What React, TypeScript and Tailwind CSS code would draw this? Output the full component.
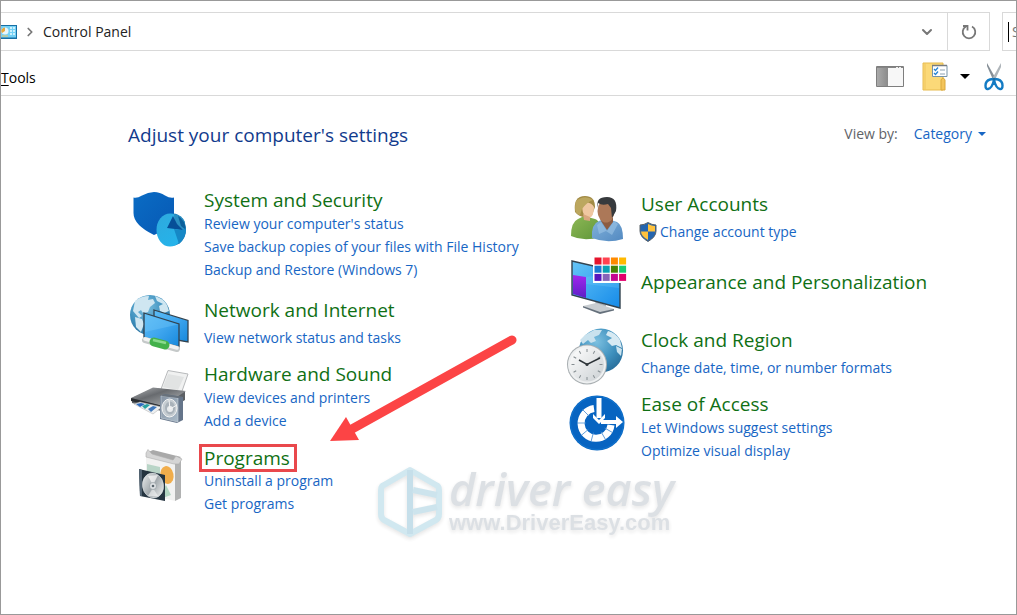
import { ReactNode } from "react";
import { ChevronDown, ChevronRight } from "lucide-react";

interface Category {
  title: string;
  links: string[];
  icon: ReactNode;
  highlighted?: boolean;
  shielded?: boolean;
}

function IconFrame({ children }: { children: ReactNode }) {
  return (
    <svg viewBox="0 -1 64 56" className="h-14 w-16 shrink-0 overflow-visible" aria-hidden="true">
      {children}
    </svg>
  );
}

function Globe({ id, cx, cy, r }: { id: string; cx: number; cy: number; r: number }) {
  return (
    <g>
      <defs>
        <radialGradient id={id} cx="0.4" cy="0.3" r="0.75">
          <stop offset="0" stopColor="#7cc0e0" />
          <stop offset="0.6" stopColor="#3d8fbd" />
          <stop offset="1" stopColor="#276c99" />
        </radialGradient>
      </defs>
      <circle cx={cx} cy={cy} r={r} fill={`url(#${id})`} />
    </g>
  );
}

function SecurityIcon() {
  return (
    <IconFrame>
      <defs>
        <linearGradient id="shield" x1="0" y1="0" x2="1" y2="1">
          <stop offset="0" stopColor="#0a6cc4" />
          <stop offset="1" stopColor="#0758b4" />
        </linearGradient>
        <linearGradient id="pie" x1="0" y1="0" x2="0.6" y2="1">
          <stop offset="0" stopColor="#2fa9dd" />
          <stop offset="1" stopColor="#25b3ea" />
        </linearGradient>
      </defs>
      <path d="M5.500 9.500 Q9 10.500 14 7.500 Q20 4 26 4 Q32 4 37 7.500 Q42 10.500 46 9.500 V25 Q46 39 26 47 Q5.500 37 5.500 25Z" fill="url(#shield)" />
      <ellipse cx="45" cy="41.500" rx="13" ry="16" fill="#1276b4" />
      <ellipse cx="42" cy="42" rx="13.500" ry="16.500" fill="url(#pie)" />
      <path d="M46 26 Q54 27 57 34 L56 44 L47 40Z" fill="#2a8fc2" />
      <path d="M50 28 Q57 32 58 42 L53 38Z" fill="#0b5f9b" />
      <path d="M45 28 L49 36 L55 42 L39 40Z" fill="#064f98" />
      <path d="M54 42 L46 41 L51 56 Q58 50 58 40Z" fill="#1688c6" />
    </IconFrame>
  );
}

function NetworkIcon() {
  return (
    <IconFrame>
      <defs>
        <linearGradient id="netscreen" x1="0" y1="0" x2="1" y2="1">
          <stop offset="0" stopColor="#5cbcf5" />
          <stop offset="0.500" stopColor="#3fa6ee" />
          <stop offset="1" stopColor="#1688dc" />
        </linearGradient>
      </defs>
      <Globe id="netglobe" cx={22} cy={21} r={20} />
      <path d="M7 7 Q13 2 21 2 L20 6 L25 5 L27 9 L22 13 L20 18 L15 19 L13 16 L10 18 L14 22 L11 24 L5 17Z" fill="#cfe6f1" />
      <path d="M27 2 Q36 5 39 11 L41 17 L36 19 L32 17 L31 12 L35 10 L29 7Z" fill="#cfe6f1" />
      <path d="M7 23 L14 25 L16 30 L13 38 L8 33Z" fill="#cfe6f1" />
      <path d="M26 16 L60 26.500 V48 L26 42Z" fill="url(#netscreen)" stroke="#33434f" strokeWidth="1.300" />
      <path d="M16 19 L51 30 V53 L16 44Z" fill="url(#netscreen)" stroke="#33434f" strokeWidth="1.300" />
      <path d="M17 20.500 L50 30.500 L17 38Z" fill="#79caf8" opacity=".35" />
      <path d="M17 46 L49 55" stroke="#c5c9c9" strokeWidth="6" strokeLinecap="round" />
      <path d="M17 45 L49 54" stroke="#f1f2f1" strokeWidth="3.500" strokeLinecap="round" />
      <path d="M26 48 L37 51" stroke="#43b14b" strokeWidth="9" strokeLinecap="round" />
      <path d="M25 46 L38 49" stroke="#89d98d" strokeWidth="2.500" />
    </IconFrame>
  );
}

function PrinterIcon() {
  return (
    <IconFrame>
      <defs>
        <linearGradient id="printer" x1="0" y1="0" x2="1" y2="1">
          <stop offset="0" stopColor="#b4b6b8" />
          <stop offset="0.400" stopColor="#686b6f" />
          <stop offset="1" stopColor="#bdc0c2" />
        </linearGradient>
        <linearGradient id="speaker" x1="0" y1="0" x2="1" y2="1">
          <stop offset="0" stopColor="#8693a3" />
          <stop offset="1" stopColor="#a9bac8" />
        </linearGradient>
      </defs>
      <path d="M33 27 L40 8.500 L60 12 L53 32Z" fill="#f0f1f1" stroke="#b8babc" />
      <path d="M40 12 L56 15 L50 28 L35 25Z" fill="#e1e3e3" />
      <path d="M4 36 L26 26 L57 30 L57 38 L37 50 L4 41Z" fill="#5c6064" />
      <path d="M3 36 L25 25.500 L58 29 L35 44Z" fill="url(#printer)" />
      <path d="M3 36 L35 44 V47 L3 39Z" fill="#292c30" />
      <path d="M6 42 L12 40 L34 45 L25 52Z" fill="#eef0f1" stroke="#aaa" strokeWidth=".5" />
      <path d="M8 42 L13 41 L17 42 L12 45Z" fill="#2b69bd" />
      <path d="M14 44 L19 42 L22 43 L17 47Z" fill="#28a2a1" />
      <path d="M20 47 L25 44 L29 45 L23 50Z" fill="#3f78bc" />
      <path d="M32 34 L37 32 L55 35 L55 58 L49 61 L32 57Z" fill="#65758a" />
      <path d="M33 34 L50 36 V60 L33 56Z" fill="url(#speaker)" stroke="#cbd3da" strokeWidth=".6" />
      <path d="M33 34 L37 32 L55 35 L50 36Z" fill="#68717b" />
      <ellipse cx="41.500" cy="46" rx="7.500" ry="9" fill="#c6cdd2" stroke="#f4f4f4" />
      <ellipse cx="42" cy="46" rx="5" ry="6.500" fill="#a9b2ba" />
      <circle cx="42" cy="47" r="3" fill="#e9ecee" />
      <path d="M41 38 L42 47 L49 43" fill="none" stroke="#f5f5f5" />
    </IconFrame>
  );
}

function ProgramsIcon() {
  return (
    <IconFrame>
      <defs>
        <linearGradient id="disc" x1="0" y1="0" x2="1" y2="1">
          <stop offset="0" stopColor="#eef0f1" />
          <stop offset="0.500" stopColor="#a2a9ad" />
          <stop offset="1" stopColor="#f7f7f7" />
        </linearGradient>
      </defs>
      <path d="M18 9 L47 17 V56 L18 49Z" fill="#f2f2f1" />
      <path d="M47 17 L53 13 V53 L47 56Z" fill="#b1b2b2" />
      <path d="M18 8 L25 5 L53 12 L47 17Z" fill="#a9a9a9" />
      <path d="M18 8 L20 4.500 L24 9 L45 15 L48 11 L54 14 L51 19 L46 19 L18 12Z" fill="#d5d5d5" stroke="#adadad" strokeWidth=".6" />
      <path d="M19 19 L32 22 V43 L19 39Z" fill="#b9d5c7" />
      <path d="M38 40 L43 50 L32 54 H28Z" fill="#b3d5c2" />
      <ellipse cx="39" cy="30" rx="6.500" ry="9" transform="rotate(-12 39 30)" fill="#f1ad4b" />
      <path d="M11 24 L37 30 V56 L12 51Z" fill="#253440" />
      <path d="M11 24 L14 25 V51 L12 51Z" fill="#536473" />
      <ellipse cx="25" cy="40.500" rx="10.500" ry="12.500" transform="rotate(-10 25 40.500)" fill="url(#disc)" stroke="#dce2e5" strokeWidth=".6" />
      <path d="M20 31 L25 40 L30 30Z" fill="#ffffff" opacity=".65" />
      <path d="M25 43 L20 51 L30 51Z" fill="#ffffff" opacity=".5" />
      <circle cx="25" cy="41" r="3.500" fill="#dfe2e4" stroke="#8a9399" strokeWidth=".6" />
      <circle cx="25" cy="41" r="1.300" fill="#5a666e" />
    </IconFrame>
  );
}

function UsersIcon() {
  return (
    <IconFrame>
      <defs>
        <linearGradient id="green" x1="0" y1="0" x2="1" y2="1">
          <stop offset="0" stopColor="#8eb855" />
          <stop offset="1" stopColor="#5f963a" />
        </linearGradient>
        <linearGradient id="blue" x1="0" y1="0" x2="1" y2="1">
          <stop offset="0" stopColor="#84b4dc" />
          <stop offset="1" stopColor="#5289c1" />
        </linearGradient>
      </defs>
      <g transform="translate(0 1)">
        <path d="M6 47 Q6 33 13 30 L19 27 L30 30 Q37 32 35 48 Q19 53 6 47Z" fill="url(#green)" />
        <path d="M10 23 Q8 7 20 7 Q30 7 30 18 L27 26 L20 28 Q14 28 10 23Z" fill="#a28b45" />
        <path d="M17 18 Q20 16 21 13 Q27 14 29 18 Q29 28 24 29 Q18 29 17 18Z" fill="#efc7a1" />
        <path d="M18 25 L25 28 L25 32 L19 31Z" fill="#d9a77f" />
        <path d="M11 12 Q20 5 28 11 Q22 13 17 20 L15 26 Q8 25 11 12Z" fill="#bca75f" />
        <path d="M27 49 Q26 35 34 32 L40 29 L52 33 Q58 36 58 50 Q42 55 27 49Z" fill="url(#blue)" />
        <path d="M36 29 H48 V33 L42 41 L36 32Z" fill="#8c5c43" />
        <ellipse cx="41" cy="22" rx="8.500" ry="11.500" fill="#ac7858" />
        <path d="M33 19 Q30 8 42 8 Q53 8 51 22 L47 29 L46 19 L43 15 Q37 17 33 14Z" fill="#373a3d" />
        <path d="M36 33 L42 42 L49 32 L53 35 L47 46 L41 42 L34 45 L32 36Z" fill="#9cc4e6" opacity=".6" />
      </g>
    </IconFrame>
  );
}

const swatches = [
  ["#e5142d", "#ff4250", "#ff8a00", "#ffb900"],
  ["#1978d0", "#0aa0b3", "#498205", "#19cc73"],
  ["#5715bd", "#8764b8", "#c50790", "#e3006c"],
];

function AppearanceIcon() {
  return (
    <IconFrame>
      <defs>
        <linearGradient id="display" x1="0" y1="0" x2="1" y2="1">
          <stop offset="0" stopColor="#65c5f7" />
          <stop offset="1" stopColor="#168be9" />
        </linearGradient>
        <linearGradient id="purple" x1="0" y1="0" x2="0" y2="1">
          <stop offset="0" stopColor="#a126ed" />
          <stop offset="1" stopColor="#5c20c6" />
        </linearGradient>
      </defs>
      <path d="M30 45 L41 49 V55 L32 53Z" fill="#adb4ba" />
      <path d="M18 50 L31 47 L49 53 L35 57Z" fill="#c8cdd1" />
      <path d="M18 50 L35 56 L49 53 V54.500 L35 58 L18 51.500Z" fill="#65707b" />
      <path d="M7 5 L55 16 V52 L7 39Z" fill="url(#display)" stroke="#33434f" strokeWidth="1.400" />
      <path d="M8 19 L21 21 V42 L8 38Z" fill="url(#purple)" />
      <path d="M21 21 L54 17 V32 L21 28Z" fill="#8edbff" opacity=".2" />
      <rect x="28" y="0" width="34" height="27" fill="white" />
      {swatches.map((row, y) =>
        row.map((color, x) => (
          <rect key={color} x={29.5 + x * 8.2} y={1.5 + y * 8.2} width="7" height="7" fill={color} />
        ))
      )}
    </IconFrame>
  );
}

function ClockIcon() {
  return (
    <IconFrame>
      <defs>
        <linearGradient id="clock" x1="0" y1="0" x2="1" y2="1">
          <stop offset="0" stopColor="#ffffff" />
          <stop offset="1" stopColor="#cbd0d3" />
        </linearGradient>
      </defs>
      <Globe id="clockglobe" cx={36} cy={26.5} r={22} />
      <path d="M20 11 L29 6 L37 6 L34 11 L29 13 L31 17 L26 19 L23 16 L18 20 L15 16Z" fill="#c9e2ee" />
      <path d="M43 7 Q51 9 55 16 L57 24 L51 21 L47 22 L42 17 L47 14 L41 11Z" fill="#d7eaf3" />
      <path d="M51 22 L57 25 L56 32 L52 28Z" fill="#cae3ef" />
      <circle cx="22" cy="40.500" r="20" fill="#a9afb2" />
      <circle cx="22" cy="40.500" r="19" fill="#eef0f1" />
      <circle cx="22" cy="40.500" r="17" fill="url(#clock)" />
      {Array.from({ length: 12 }, (_, i) => (
        <path key={i} d="M22 25 V28" transform={`rotate(${i * 30} 22 40.5)`} stroke="#868e92" />
      ))}
      <path d="M14 36 L22 40.500 L35 34" fill="none" stroke="#2d3439" strokeWidth="1.500" />
      <circle cx="22" cy="40.500" r="1.500" fill="#333a3e" />
    </IconFrame>
  );
}

function AccessIcon() {
  return (
    <IconFrame>
      <circle cx="32" cy="31" r="27.500" fill="#0764c1" />
      <circle cx="32" cy="31" r="26.500" fill="none" stroke="#1780d6" strokeWidth=".6" />
      <path d="M29 16.500 A15 15 0 1 0 46 33" fill="none" stroke="white" strokeWidth="7" />
      {[120, 150, 195, 230, 270, 315].map((angle) => (
        <path key={angle} d="M31 12 V21" transform={`rotate(${angle} 31 31)`} stroke="#4a8fd2" strokeWidth=".8" />
      ))}
      <path d="M34 5 V25" stroke="#0764c1" strokeWidth="8" />
      <path d="M34 6 V26" stroke="white" strokeWidth="5" />
      <path d="M28 22 L34 28 L40 22 V26 L34 32 L28 26Z" fill="white" />
      <path d="M36 30 H52" stroke="white" strokeWidth="4" />
      <path d="M51 24 L58 30 L51 36Z" fill="white" />
    </IconFrame>
  );
}

function UacShield() {
  return (
    <svg viewBox="0 0 18 20" className="h-5 w-[18px] shrink-0" aria-hidden="true">
      <path d="M1 3 Q5 3 9 .5 Q13 3 17 3 V9 Q17 15 9 19.500 Q1 15 1 9Z" fill="#2465ae" />
      <path d="M9 2 Q13 4 16 4 V9.500 H9Z" fill="#ffc23d" />
      <path d="M2 9.500 H9 V18 Q2 14 2 9.500Z" fill="#ffc23d" />
      <path d="M1 3 Q5 3 9 .5 Q13 3 17 3 V9 Q17 15 9 19.500 Q1 15 1 9Z" fill="none" stroke="#5a6268" />
    </svg>
  );
}

const leftCategories: Category[] = [
  {
    title: "System and Security",
    links: ["Review your computer's status", "Save backup copies of your files with File History", "Backup and Restore (Windows 7)"],
    icon: <SecurityIcon />,
  },
  { title: "Network and Internet", links: ["View network status and tasks"], icon: <NetworkIcon /> },
  { title: "Hardware and Sound", links: ["View devices and printers", "Add a device"], icon: <PrinterIcon /> },
  { title: "Programs", links: ["Uninstall a program", "Get programs"], icon: <ProgramsIcon />, highlighted: true },
];

const rightCategories: Category[] = [
  { title: "User Accounts", links: ["Change account type"], icon: <UsersIcon />, shielded: true },
  { title: "Appearance and Personalization", links: [], icon: <AppearanceIcon /> },
  { title: "Clock and Region", links: ["Change date, time, or number formats"], icon: <ClockIcon /> },
  { title: "Ease of Access", links: ["Let Windows suggest settings", "Optimize visual display"], icon: <AccessIcon /> },
];

function CategoryItem({ title, links, icon, highlighted, shielded }: Category) {
  const spacing = links.length === 0 ? "pt-3.5" : links.length === 1 ? "gap-1 pt-1" : "";

  return (
    <li className="flex items-start gap-3">
      {icon}
      <div className={`flex flex-col items-start whitespace-nowrap ${spacing}`}>
        <h2 className="-mb-0.5 text-[19px] leading-[27px] text-[#107014]">
          {highlighted ? (
            <a href="#" className="-mb-px -ml-[5px] block border-[3px] border-[#e9484c] pr-1 pl-0.5 leading-[22px]">{title}</a>
          ) : (
            <a href="#">{title}</a>
          )}
        </h2>
        {links.map((link) => (
          <a key={link} href="#" className={`flex items-center text-[14px] leading-[23px] text-[#1766c4] hover:underline ${shielded ? "-ml-0.5 gap-[3px]" : ""}`}>
            {shielded && <UacShield />}
            {link}
          </a>
        ))}
      </div>
    </li>
  );
}

function AddressBar() {
  return (
    <header className="mt-[11px] flex h-[39px] text-[14px] text-[#222]">
      <div className="flex min-w-0 flex-1 items-center border border-l-0 border-[#d9d9d9]">
        <svg viewBox="0 0 16 14" className="h-3.5 w-4" aria-hidden="true">
          <path d="M0 0 H16 V14 H0Z" fill="#176fa5" />
          <path d="M0 1 H15 V12.500 H0Z" fill="#74d1f5" />
          <circle cx="4" cy="6" r="3.500" fill="#e7f6fc" />
          <path d="M4 6 V2.500 A3.500 3.500 0 0 0 1 8Z" fill="#e9a83d" />
          <path d="M9 3 H11 M12 3 H14 M9 6 H11 M12 6 H14 M9 9 H11 M12 9 H14" stroke="#e9faff" strokeWidth="1.500" />
          <path d="M1 11 H7" stroke="#f0c565" />
        </svg>
        <ChevronRight className="mx-1.5 size-3.5 text-[#777]" strokeWidth={3} />
        <span className="flex-1">Control Panel</span>
        <button aria-label="Previous locations" className="mr-3">
          <ChevronDown className="size-4 text-[#777]" strokeWidth={3} />
        </button>
        <button aria-label="Refresh" className="flex h-full w-[42px] items-center justify-center border-l border-[#d9d9d9]">
          <svg viewBox="0 0 16 16" className="size-4" fill="none" stroke="#777" strokeWidth="1.800">
            <path d="M11 2.500 A6.300 6.300 0 1 1 5 2.500" />
            <path d="M2 2 H6.500 V6.500" />
          </svg>
        </button>
      </div>
      <div className="ml-3 flex w-3.5 items-center overflow-hidden border border-r-0 border-[#d9d9d9] pl-[5px]">
        <span className="h-5 w-px shrink-0 bg-black" />
        <input aria-label="Search Control Panel" placeholder="Search Control Panel" className="ml-[3px] w-40 shrink-0 outline-none placeholder:text-[#777]" />
      </div>
    </header>
  );
}

function Toolbar() {
  return (
    <nav className="flex h-[45px] items-center border-b border-[#d9d9d9] pt-2.5 pb-1 text-[14px] text-black">
      <button className="mt-0.5 mr-auto"><u className="underline-offset-2">T</u>ools</button>
      <button aria-label="Preview pane">
        <svg viewBox="0 0 28 21" className="h-[21px] w-7">
          <defs>
            <linearGradient id="pane">
              <stop offset="0" stopColor="#aaa" />
              <stop offset="1" stopColor="#8b8b8b" />
            </linearGradient>
          </defs>
          <path d="M.5 .5 H27.500 V20.500 H.5Z" fill="#f7f7f7" stroke="#7e7e7e" />
          <path d="M1 1 H27 V2 H1Z" fill="#858585" />
          <path d="M1 2 H12 V20 H1Z" fill="url(#pane)" />
          <path d="M20 1.500 H22 M23 1.500 H25" stroke="#eee" />
        </svg>
      </button>
      <button aria-label="Folder options" className="ml-[18px]">
        <svg viewBox="0 0 26 29" className="h-[29px] w-[26px]">
          <path d="M1 1 H21 V28 H1Z" fill="#fbd978" stroke="#e7bb4f" />
          <path d="M3 1 V28" stroke="#efc55f" />
          <path d="M19 28 V18 Q21 14 23 18 V28Z" fill="#f3c45b" stroke="#daa83c" />
          <path d="M10.500 3.500 H25 V14.500 H10.500Z" fill="#fff" stroke="#7794a8" />
          <path d="M10 3.500 H25" stroke="#767b80" strokeWidth="1.500" />
          <path d="M12 7 L13.500 8.500 L16 5.500 M12 11 L13.500 12.500 L16 9.500" fill="none" stroke="#2684d4" strokeWidth="1.300" />
          <path d="M18 8 H23 M18 12 H23" stroke="#8ca1b1" />
        </svg>
      </button>
      <button aria-label="Folder option menu" className="ml-3">
        <svg viewBox="0 0 10 5" className="h-[5px] w-2.5"><path d="M0 0 H10 L5 5Z" /></svg>
      </button>
      <button aria-label="Cut" className="mr-3 ml-3.5">
        <svg viewBox="0 0 20 29" className="h-[29px] w-5">
          <path d="M3 1 L12 17 L10 20 L3 4Z" fill="#858e96" />
          <path d="M17 1 V5 L10 20 L8 17Z" fill="#afb5ba" />
          <path d="M9 17 L6 17.500 Q1.500 19 1.500 23.500 Q1.500 27.500 4 27 Q8 26.500 10 18 Q12 26.500 16 27 Q18.500 27.500 18.500 23.500 Q18.500 19 14 17.500 L11 17" fill="none" stroke="#137bc4" strokeWidth="2.400" />
          <circle cx="10" cy="17" r="1.300" fill="#176ba9" />
        </svg>
      </button>
    </nav>
  );
}

function Watermark() {
  return (
    <div className="pointer-events-none absolute top-[465px] left-[376px] flex items-start gap-1.5 opacity-90 drop-shadow-[0_2px_2px_rgba(0,0,0,0.12)]" aria-hidden="true">
      <svg viewBox="0 0 66 72" className="h-[72px] w-[66px]">
        <path d="M33 4 L59 19 Q62 20 62 24 V48 Q62 52 59 54 L33 68 L7 54 Q4 52 4 48 V24 Q4 20 7 19Z" fill="none" stroke="#cde6ef" strokeWidth="6" strokeLinejoin="round" />
        <path d="M33 4 V68" stroke="#c0dce8" strokeWidth="6" />
        <path d="M36 24 L60 29 M36 46 L60 41" stroke="#c8e2ec" strokeWidth="6" />
      </svg>
      <div className="font-['Open_Sans',sans-serif] text-[#d9dde2]">
        <p className="text-[45px] leading-[46px] font-semibold italic">driver easy</p>
        <p className="font-['Liberation_Sans',sans-serif] text-[22px] leading-[22px] font-bold">www.DriverEasy.com</p>
      </div>
    </div>
  );
}

export default function App() {
  return (
    <div className="relative min-h-screen overflow-hidden border border-[#999] bg-white font-['Open_Sans','Noto_Sans',sans-serif]">
      <AddressBar />
      <Toolbar />
      <Watermark />
      <main className="pr-7 pl-[127px]">
        <div className="flex h-[91px] items-start justify-between pt-6">
          <h1 className="text-[19px] leading-[30px] text-[#123b8d]">Adjust your computer's settings</h1>
          <div className="mr-0.5 flex items-center gap-4 text-[14px] leading-7 text-[#5f6368]">
            <span>View by:</span>
            <button className="flex items-center gap-1.5 text-[#1766c4]">
              Category
              <svg viewBox="0 0 8 4" className="h-1 w-2" fill="#1766c4"><path d="M0 0 H8 L4 4Z" /></svg>
            </button>
          </div>
        </div>
        <div className="grid grid-cols-2 gap-3.5">
          <ul className="flex flex-col gap-3">
            {leftCategories.map((category) => (
              <CategoryItem key={category.title} {...category} />
            ))}
          </ul>
          <ul className="flex flex-col gap-3">
            {rightCategories.map((category) => (
              <CategoryItem key={category.title} {...category} />
            ))}
          </ul>
        </div>
      </main>
      <svg viewBox="0 0 190 108" className="pointer-events-none absolute top-[333px] left-[328px] h-[108px] w-[190px]" aria-hidden="true">
        <path d="M183 6 L23 95" stroke="#fc4445" strokeWidth="9" strokeLinecap="round" />
        <path d="M1 107 L17 83 L30 106Z" fill="#fc4445" />
      </svg>
    </div>
  );
}
